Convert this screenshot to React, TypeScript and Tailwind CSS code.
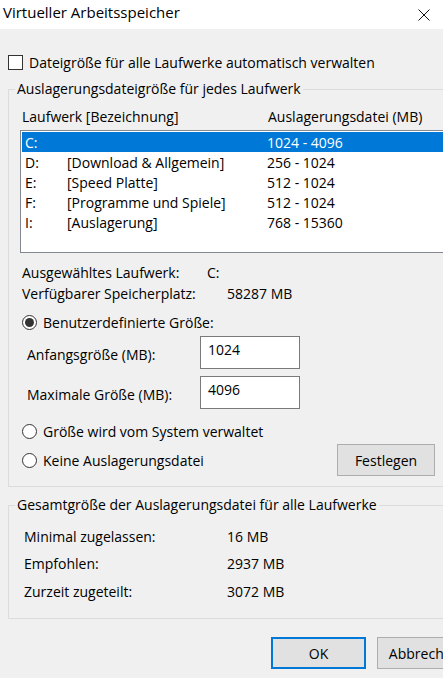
import React from 'react';

const drives = [
  { letter: 'C:', label: '', size: '1024 - 4096' },
  { letter: 'D:', label: '[Download & Allgemein]', size: '256 - 1024' },
  { letter: 'E:', label: '[Speed Platte]', size: '512 - 1024' },
  { letter: 'F:', label: '[Programme und Spiele]', size: '512 - 1024' },
  { letter: 'I:', label: '[Auslagerung]', size: '768 - 15360' },
];

const Radio: React.FC<{ checked?: boolean; label: string }> = ({ checked, label }) => (
  <div className="flex items-center h-[20px]">
    <span className="w-[15px] h-[15px] rounded-full border border-[#333333] bg-white flex items-center justify-center shrink-0">
      {checked && <span className="w-[9px] h-[9px] rounded-full bg-[#333333]" />}
    </span>
    <span className="ml-[6px] whitespace-nowrap">{label}</span>
  </div>
);

export default function App() {
  return (
    <div className="w-[443px] h-[678px] overflow-hidden bg-[#f0f0f0] text-black text-[14px] font-['Open_Sans',sans-serif]">
      {/* Title bar */}
      <div className="h-[29px] bg-white flex items-start justify-between pl-[3px] pr-[13px]">
        <span className="mt-[2px] leading-[20px] text-[15px]">Virtueller Arbeitsspeicher</span>
        <svg className="mt-[9px]" width="12" height="12" viewBox="0 0 12 12">
          <path d="M0.5 0.5 L11.5 11.5 M11.5 0.5 L0.5 11.5" stroke="#111" strokeWidth="1" />
        </svg>
      </div>

      <div className="w-[480px] px-[8px]">
        {/* Auto checkbox */}
        <div className="mt-[26px] h-[15px] flex items-center">
          <span className="w-[15px] h-[15px] border border-[#333333] bg-white shrink-0" />
          <span className="ml-[6px] whitespace-nowrap">Dateigröße für alle Laufwerke automatisch verwalten</span>
        </div>

        {/* Group 1 */}
        <fieldset className="mt-[9px] w-[462px] border border-[#dcdcdc] pb-[10px]">
          <legend className="ml-[6px] px-[2px] leading-[20px] whitespace-nowrap">
            Auslagerungsdateigröße für jedes Laufwerk
          </legend>

          <div className="mt-[7px] h-[20px] flex items-center pl-[13px] whitespace-nowrap">
            <span className="w-[246px]">Laufwerk [Bezeichnung]</span>
            <span>Auslagerungsdatei (MB)</span>
          </div>

          <div className="mt-[4px] ml-[11px] w-[440px] h-[123px] border border-[#828790] bg-white p-[1px]">
            {drives.map((d, i) => (
              <div
                key={d.letter}
                className={`h-[20px] flex items-center pl-[3px] whitespace-nowrap ${
                  i === 0 ? 'bg-[#0078d7] text-white' : ''
                }`}
              >
                <span className="w-[42px]">{d.letter}</span>
                <span className="w-[200px]">{d.label}</span>
                <span>{d.size}</span>
              </div>
            ))}
          </div>

          <div className="mt-[9px] h-[20px] flex items-center pl-[13px] whitespace-nowrap">
            <span className="w-[185px]">Ausgewähltes Laufwerk:</span>
            <span>C:</span>
          </div>
          <div className="mt-[1px] h-[20px] flex items-center pl-[13px] whitespace-nowrap">
            <span className="w-[205px]">Verfügbarer Speicherplatz:</span>
            <span>58287 MB</span>
          </div>

          <div className="mt-[9px] pl-[13px]">
            <Radio checked label="Benutzerdefinierte Größe:" />
          </div>

          <div className="mt-[4px] flex items-center pl-[18px]">
            <span className="w-[173px] mt-[3px] whitespace-nowrap">Anfangsgröße (MB):</span>
            <div className="w-[100px] h-[33px] border border-[#7a7a7a] bg-white pl-[7px] pt-[3px] leading-[20px]">1024</div>
          </div>
          <div className="mt-[7px] flex items-center pl-[18px]">
            <span className="w-[173px] mt-[3px] whitespace-nowrap">Maximale Größe (MB):</span>
            <div className="w-[100px] h-[33px] border border-[#7a7a7a] bg-white pl-[7px] pt-[3px] leading-[20px]">4096</div>
          </div>

          <div className="mt-[12px] pl-[13px]">
            <Radio label="Größe wird vom System verwaltet" />
          </div>

          <div className="mt-[3px] h-[32px] flex items-center pl-[13px]">
            <div className="w-[315px]">
              <Radio label="Keine Auslagerungsdatei" />
            </div>
            <button className="w-[98px] h-[32px] bg-[#e1e1e1] border border-[#adadad]">Festlegen</button>
          </div>
        </fieldset>

        {/* Group 2 */}
        <fieldset className="mt-[8px] w-[462px] border border-[#dcdcdc] pb-[17px]">
          <legend className="ml-[6px] px-[2px] leading-[20px] whitespace-nowrap">
            Gesamtgröße der Auslagerungsdatei für alle Laufwerke
          </legend>
          {[
            ['Minimal zugelassen:', '16 MB', 'mt-[11px]'],
            ['Empfohlen:', '2937 MB', 'mt-[7px]'],
            ['Zurzeit zugeteilt:', '3072 MB', 'mt-[8px]'],
          ].map(([k, v, m]) => (
            <div key={k} className={`${m} h-[20px] flex items-center pl-[15px] whitespace-nowrap`}>
              <span className="w-[203px]">{k}</span>
              <span>{v}</span>
            </div>
          ))}
        </fieldset>

        {/* Buttons */}
        <div className="mt-[18px] ml-[263px] flex gap-[11px]">
          <button className="w-[98px] h-[32px] bg-[#e1e1e1] border-2 border-[#0078d7]">OK</button>
          <button className="w-[98px] h-[32px] bg-[#e1e1e1] border border-[#adadad] whitespace-nowrap">Abbrechen</button>
        </div>
      </div>
    </div>
  );
}
